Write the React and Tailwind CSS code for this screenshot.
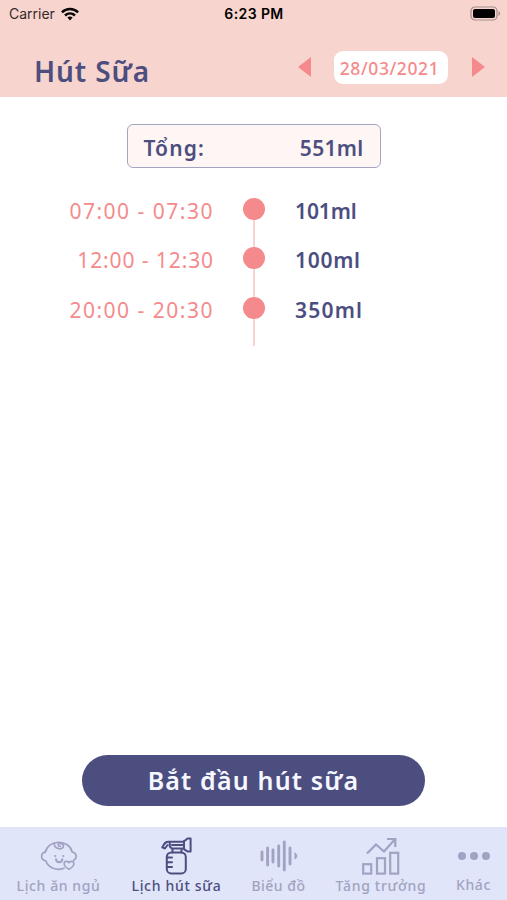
import React from 'react'

const sessions = [
  { time: '07:00 - 07:30', amount: '101ml', timeClass: 'tracking-[1.5px]', amountClass: 'tracking-[-0.1px]' },
  { time: '12:00 - 12:30', amount: '100ml', timeClass: 'tracking-[0.9px]', amountClass: 'tracking-[0.7px]' },
  { time: '20:00 - 20:30', amount: '350ml', timeClass: 'tracking-[1.5px]', amountClass: 'tracking-[1.2px]' },
]

function StatusBar() {
  return (
    <div className="grid h-[27px] grid-cols-3 items-center pl-[9px] pr-[6px] font-['Inter',sans-serif] text-black">
      <div className="flex items-center gap-[6px] text-[14px] text-[#332b2a]">
        Carrier
        <svg className="h-[14px] w-[18px]" viewBox="0 0 18 14" fill="none" stroke="#080606" strokeWidth="2.5">
          <path d="M.9 5.3C5.5.9 12.5.9 17.1 5.3" />
          <path d="M4 8.5c2.9-2.7 7.1-2.7 10 0" />
          <path d="M6.4 10.6c1.5-1.4 3.7-1.4 5.2 0L9 13.4z" fill="#080606" stroke="none" />
        </svg>
      </div>
      <div className="whitespace-nowrap pr-[2px] text-center text-[14px] font-semibold tracking-[0.4px]">6:23 PM</div>
      <svg className="h-[15px] w-[31px] justify-self-end" viewBox="0 0 31 15">
        <rect x="1" y="1" width="26" height="13" rx="4" fill="none" stroke="#a28d8b" strokeWidth="1.2" />
        <rect x="3" y="3" width="22" height="9" rx="2" fill="#000" />
        <path d="M28.5 5.2c2 .6 2 4 0 4.6z" fill="#a28d8b" />
      </svg>
    </div>
  )
}

function Header() {
  return (
    <header className="h-[97px] bg-[#f8d4ce]">
      <StatusBar />
      <div className="flex justify-between pl-[34px] pr-[22px]">
        <h1 className="mt-[24px] whitespace-nowrap text-[28px] leading-10 font-semibold tracking-[0.9px]">Hút Sữa</h1>
        <div className="mt-[23px] flex h-[34px] items-center text-[#f58a8c]">
          <svg className="h-5 w-[13px]" viewBox="0 0 13 20" fill="currentColor">
            <path d="M0 10 13 0v20z" />
          </svg>
          <div className="ml-[23px] mr-[24px] flex h-[33px] w-[114px] items-center justify-center rounded-[9px] bg-white pr-[3px] pt-[3px] text-[17.5px] font-medium tracking-[0.6px]">
            28/03/2021
          </div>
          <svg className="h-5 w-[13px]" viewBox="0 0 13 20" fill="currentColor">
            <path d="M0 0v20l13-10z" />
          </svg>
        </div>
      </div>
    </header>
  )
}

function Timeline() {
  return (
    <div className="mt-[30px]">
      {sessions.map((s) => (
        <div key={s.time} className="grid h-[49.3px] grid-cols-[214px_80px_1fr] text-[21px] leading-[27px]">
          <div className={`text-right text-[#f58a8c] ${s.timeClass}`}>{s.time}</div>
          <div className="flex flex-col items-center">
            <div className="size-[22px] shrink-0 rounded-full bg-[#f58a8c]" />
            <div className="w-[2px] flex-1 bg-[#f9d3d1]" />
          </div>
          <div className={`pl-px font-semibold ${s.amountClass}`}>{s.amount}</div>
        </div>
      ))}
    </div>
  )
}

function BabyIcon() {
  return (
    <svg className="h-[30px] w-[38px]" viewBox="0 0 38 30" fill="none" stroke="currentColor" strokeWidth="1.7" strokeLinecap="round" strokeLinejoin="round">
      <path d="M24 27.2c-7.5 3.1-15.6-.3-18.3-7.4C.4 19 .3 12.1 5.3 11.2 8-1.8 29.2-2 32.2 11c4.7.8 5.3 6 1.6 8.2" />
      <path d="M14.2 2.6c0 6.2 9.3 6.6 9.3 2.4 0-3.6-5.9-3.2-5.2-.6.3.9 1.4 1 2.1.7" />
      <path d="M16 18.2c.4 4 6 4 6.4 0" strokeWidth="2" />
      <path d="M15.2 15h.1M23.2 15h.1" strokeWidth="2.2" />
      <path d="M29 28.4c-8.4-5.2-4.2-10.6 0-6.9 4.2-3.7 8.4 1.7 0 6.9Z" />
    </svg>
  )
}

function PumpIcon() {
  return (
    <svg className="h-[38px] w-8" viewBox="0 0 32 38" fill="none" stroke="currentColor" strokeWidth="2" strokeLinecap="round" strokeLinejoin="round">
      <rect x="5.8" y="15.5" width="19" height="20.9" rx="4.5" />
      <path d="M11.5 15.5V12M20.5 15.5V12M6 20.5h5M6 25.2h5M6 29.9h5" />
      <path d="M23 4c1.8-.6 2.6-2.4 4-2.4h2.6v13H27c-1.4 0-2.2-1.8-4-2.4Z" />
      <path d="M23 4.7H7.5C4.3 4.6 3.5 6.6 1.3 10.3l2.6 1.2L6.6 8M8.8 5v4.5l2 2H23M11 8.1h11" />
    </svg>
  )
}

function WaveIcon() {
  return (
    <svg className="h-8 w-[38px]" viewBox="0 0 38 32" fill="none" stroke="currentColor" strokeWidth="2.9" strokeLinecap="round">
      <path d="M2 12v8M7.6 8v17M13 10v12M18.7 6v20M24.3 2v28M30 8v16" />
      <path d="M35 13.2v5.6c2.5-1 2.5-4.6 0-5.6Z" fill="currentColor" strokeWidth="1" />
    </svg>
  )
}

function GrowthIcon() {
  return (
    <svg className="h-[38px] w-[38px]" viewBox="0 0 38 38" fill="none" stroke="currentColor" strokeWidth="2.2">
      <rect x="1.2" y="27.2" width="8" height="9.4" />
      <rect x="15" y="21.2" width="8" height="15.4" />
      <rect x="28.2" y="15.8" width="8" height="20.8" />
      <path d="m5 16.5 9-9 8 7L33 2.3M25 2h8.3v8" />
    </svg>
  )
}

function TabBar() {
  return (
    <nav className="grid h-[73px] grid-cols-[117px_119px_85px_119px_1fr] bg-[#e0e5f9] text-[14px] leading-[20px] font-medium whitespace-nowrap text-[#a1a3c2]">
      <div className="flex flex-col items-center pt-[14px]">
        <BabyIcon />
        <span className="mt-[5px] tracking-[0.6px]">Lịch ăn ngủ</span>
      </div>
      <div className="flex flex-col items-center pt-[10px] text-[#4c4e80]">
        <PumpIcon />
        <span className="mt-[1px] tracking-[0.7px]">Lịch hút sữa</span>
      </div>
      <div className="flex flex-col items-center pt-[13px]">
        <WaveIcon />
        <span className="mt-[4px] tracking-[0.5px]">Biểu đồ</span>
      </div>
      <div className="flex flex-col items-center pt-[10px]">
        <GrowthIcon />
        <span className="mt-[1px] ml-px tracking-[0.7px]">Tăng trưởng</span>
      </div>
      <div className="flex flex-col items-center pt-[25px]">
        <div className="flex gap-[4px]">
          <i className="size-2 rounded-full bg-current" />
          <i className="size-2 rounded-full bg-current" />
          <i className="size-2 rounded-full bg-current" />
        </div>
        <span className="mt-[15px] tracking-[0.6px]">Khác</span>
      </div>
    </nav>
  )
}

export default function App() {
  return (
    <div className="flex h-[900px] w-[507px] flex-col overflow-hidden bg-white font-['Noto_Sans',sans-serif] text-[#4c4e80]">
      <Header />
      <main className="flex flex-1 flex-col">
        <div className="mx-auto mt-[27px] flex h-11 w-[254px] items-center justify-between rounded-[6px] border border-[#a5a3c2] bg-[#fef6f4] px-[16px] pt-[5px] text-[21px] font-semibold">
          <span className="tracking-[1.1px]">Tổng:</span>
          <span className="tracking-[0.3px]">551ml</span>
        </div>
        <Timeline />
        <button className="mx-auto mt-auto mb-[21px] h-[51px] w-[343px] rounded-full bg-[#4c4e80] text-[25px] font-semibold tracking-[1.15px] text-[#f6f7ff]">
          Bắt đầu hút sữa
        </button>
      </main>
      <TabBar />
    </div>
  )
}
